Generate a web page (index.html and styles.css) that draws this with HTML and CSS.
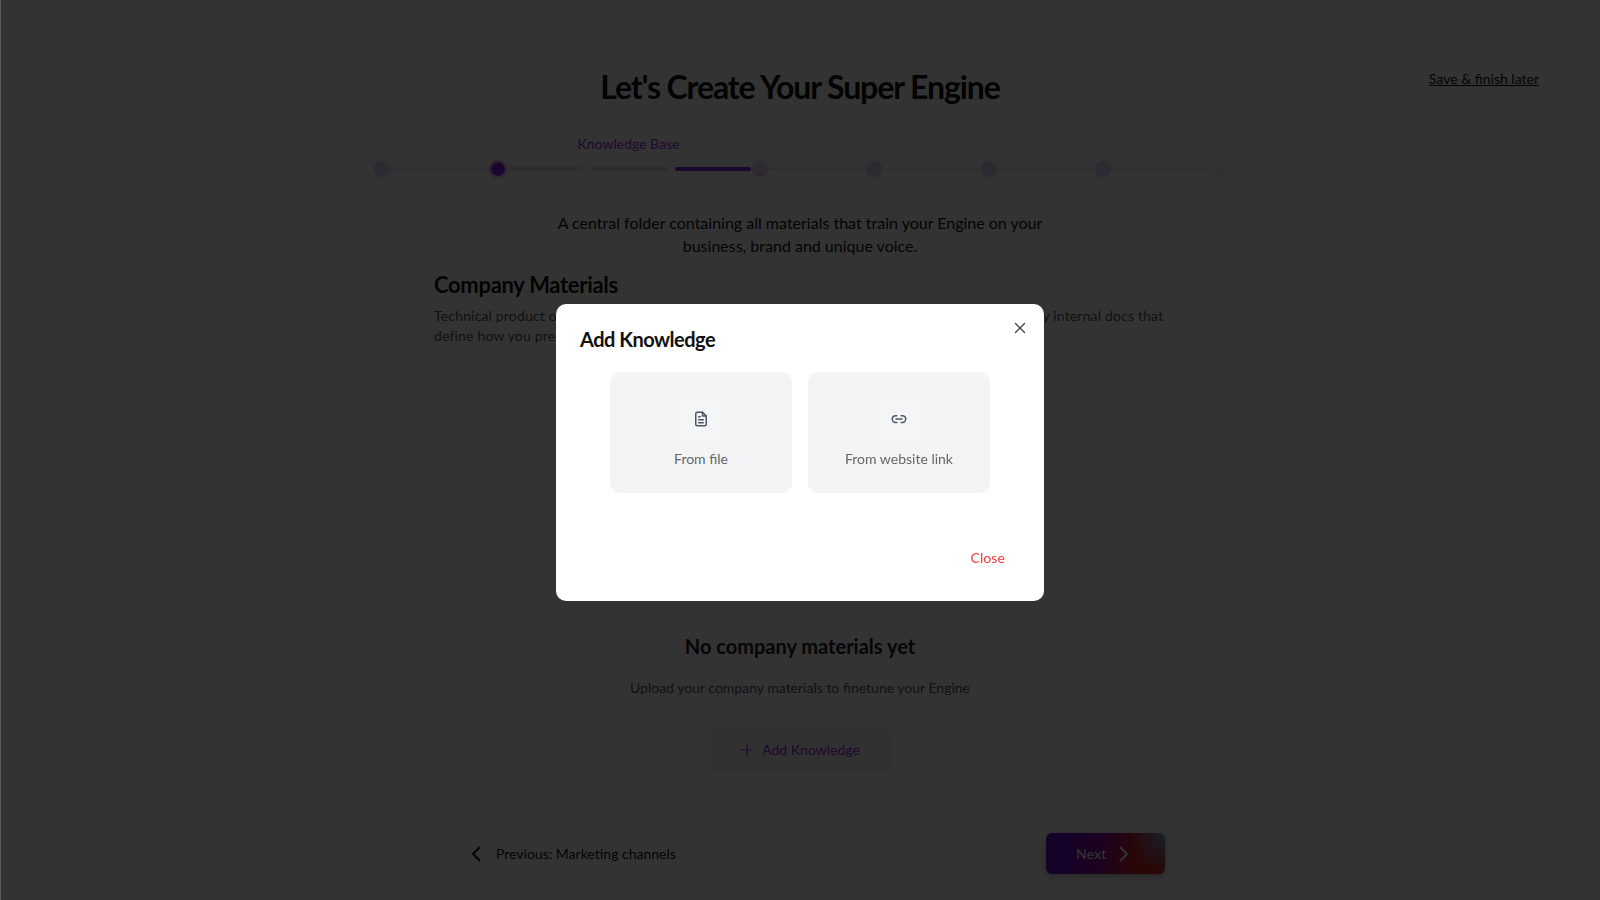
FILE: index.html
```html
<!DOCTYPE html>
<html lang="en">
<head>
<meta charset="utf-8">
<title>Let's Create Your Super Engine</title>
<link rel="stylesheet" href="styles.css">
</head>
<body>
<div class="page">
  <header class="top">
    <span></span>
    <h1 class="title">Let's Create Your Super Engine</h1>
    <a class="later" href="#">Save &amp; finish later</a>
  </header>

  <div class="stepper">
    <div class="step-col">
      <span class="dot"></span><span class="line"></span>
    </div>
    <div class="step-col">
      <span class="dot dot-active"></span>
      <span class="seg seg-light"></span>
      <span class="seg-wrap"><span class="step-label">Knowledge Base</span><span class="seg seg-light"></span></span>
      <span class="seg seg-on"></span>
    </div>
    <div class="step-col step-plain"><span class="dot"></span><span class="line"></span></div>
    <div class="step-col step-plain"><span class="dot"></span><span class="line"></span></div>
    <div class="step-col step-plain"><span class="dot"></span><span class="line"></span></div>
    <div class="step-col step-plain"><span class="dot"></span><span class="line"></span></div>
    <span class="dot dot-last"></span>
  </div>

  <p class="intro">A central folder containing all materials that train your Engine on your<br>business, brand and unique voice.</p>

  <main class="content">
    <h2 class="section-title">Company Materials</h2>
    <p class="section-text">Technical product overviews, case studies, white papers, sales decks, pricing guides, FAQs and any internal docs that<br>define how you present your products and services to your customers.</p>

    <div class="empty">
      <h3 class="empty-title">No company materials yet</h3>
      <p class="empty-text">Upload your company materials to finetune your Engine</p>
      <button class="add-btn" type="button">
        <svg width="14" height="14" viewBox="0 0 14 14" fill="none" stroke="currentColor" stroke-width="1.2" stroke-linecap="round"><path d="M7 1.5v11M1.5 7h11"/></svg>
        <span>Add Knowledge</span>
      </button>
    </div>

    <footer class="nav">
      <button class="prev" type="button">
        <svg width="12" height="18" viewBox="0 0 12 18" fill="none" stroke="currentColor" stroke-width="2" stroke-linecap="round" stroke-linejoin="round"><path d="M9.5 2.5 3 9l6.5 6.5"/></svg>
        <span>Previous: Marketing channels</span>
      </button>
      <button class="next" type="button">
        <span>Next</span>
        <svg width="12" height="18" viewBox="0 0 12 18" fill="none" stroke="currentColor" stroke-width="2" stroke-linecap="round" stroke-linejoin="round"><path d="M2.500 2.500 9 9l-6.500 6.500"/></svg>
      </button>
    </footer>
  </main>
</div>

<div class="overlay">
  <section class="modal">
    <button class="x" type="button" aria-label="Close">
      <svg width="14" height="14" viewBox="0 0 14 14" fill="none" stroke="currentColor" stroke-width="1.3" stroke-linecap="round"><path d="M2.500 2.500l9 9M11.500 2.500l-9 9"/></svg>
    </button>
    <h2 class="modal-title">Add Knowledge</h2>
    <div class="cards">
      <button class="card" type="button">
        <span class="tile">
          <svg width="18" height="18" viewBox="0 0 24 24" fill="none" stroke="currentColor" stroke-width="2" stroke-linecap="round" stroke-linejoin="round"><path d="M14 3H7a2 2 0 0 0-2 2v14a2 2 0 0 0 2 2h10a2 2 0 0 0 2-2V8z"/><path d="M14 3v5h5"/><path d="M9 9h2M9 13h6M9 17h6"/></svg>
        </span>
        <span class="card-label">From file</span>
      </button>
      <button class="card" type="button">
        <span class="tile">
          <svg width="18" height="18" viewBox="0 0 24 24" fill="none" stroke="currentColor" stroke-width="2" stroke-linecap="round" stroke-linejoin="round"><path d="M9 7.500H7.500a4.500 4.500 0 0 0 0 9H9"/><path d="M15 7.500h1.500a4.500 4.500 0 0 1 0 9H15"/><path d="M8 12h8"/></svg>
        </span>
        <span class="card-label">From website link</span>
      </button>
    </div>
    <div class="modal-foot">
      <button class="close" type="button">Close</button>
    </div>
  </section>
</div>
</body>
</html>
```
FILE: styles.css
```css
* { box-sizing: border-box; }
html, body { margin: 0; height: 100%; }
body {
  background: #fff;
  color: #111;
  font-family: Lato, "Open Sans", Arial, sans-serif;
  overflow: hidden;
}
button { font: inherit; cursor: pointer; }

.page { height: 900px; display: flex; flex-direction: column; align-items: center; }

.top {
  width: 100%;
  display: grid;
  grid-template-columns: 1fr auto 1fr;
  padding-top: 64px;
}
.title {
  margin: 0;
  font-size: 32px;
  line-height: 46px;
  font-weight: 700;
  letter-spacing: -1.1px;
  color: #111;
  text-align: center;
}
.later {
  justify-self: end;
  margin: 6px 61px 0 0;
  font-size: 14px;
  line-height: 18px;
  color: #111;
}

.stepper {
  display: flex;
  align-items: center;
  width: 852px;
  height: 18px;
  margin-top: 50px;
}
.step-col { display: flex; align-items: center; width: 114.500px; flex: none; }
.step-col:nth-child(2) { width: 263px; }
.dot {
  width: 16px; height: 16px; border-radius: 50%;
  background: #e2d8f2; flex: none;
  box-shadow: 0 0 0 1px #f0eaf8;
}
.dot-last { background: #f4f0f9; box-shadow: none; }
.dot-active {
  width: 18px; height: 18px;
  background: #8a20e0;
  border: 1px solid #c8b4e6;
  box-shadow: inset 0 0 0 1px #fff;
}
.line { flex: 1; height: 1px; background: #dfd6ee; }
.seg { display: block; height: 4px; border-radius: 2px; width: 76px; flex: none; }
.seg-light { background: #e2dbee; }
.seg-on { background: #8a20e0; margin-left: 8px; }
.seg-wrap { position: relative; margin-left: 8px; }
.step-label {
  position: absolute;
  left: 50%;
  top: -32px;
  transform: translateX(-50%);
  white-space: nowrap;
  font-size: 14px;
  line-height: 18px;
  color: #9c28f0;
}

.intro {
  margin: 34px 0 0;
  text-align: center;
  font-size: 16px;
  line-height: 22.500px;
  color: #111;
}

.content { width: 732px; flex: 1; display: flex; flex-direction: column; }
.section-title {
  margin: 13px 0 0;
  font-size: 22px;
  line-height: 30px;
  font-weight: 700;
  letter-spacing: -0.3px;
  color: #111;
}
.section-text {
  margin: 6px 0 0;
  font-size: 14px;
  line-height: 20px;
  letter-spacing: 0.17px;
  color: #555;
  white-space: nowrap;
}

.empty {
  margin-top: 287px;
  display: flex;
  flex-direction: column;
  align-items: center;
}
.empty-title { margin: 0; font-size: 20px; line-height: 26px; font-weight: 700; color: #222; }
.empty-text { margin: 19px 0 0; font-size: 14px; line-height: 20px; color: #555; }
.add-btn {
  margin-top: 30px;
  width: 181px; height: 43px;
  display: flex; align-items: center; justify-content: center; gap: 8px;
  background: #f5f3f8;
  border: 0;
  border-radius: 6px;
  color: #9c28f0;
  font-size: 14px;
}

.nav { margin-top: auto; padding-bottom: 26px; display: flex; justify-content: space-between; align-items: center; }
.prev {
  width: 271px; height: 41px;
  display: flex; align-items: center; gap: 14px;
  padding: 0 0 0 35px;
  background: #fff;
  border: 1px solid #f0f0f0;
  border-radius: 6px;
  color: #111;
  font-size: 14px;
}
.next {
  width: 119px; height: 41px;
  margin-right: 1px;
  display: flex; align-items: center; gap: 11px;
  padding: 0 0 0 30px;
  border: 0;
  border-radius: 6px;
  color: #fff;
  font-size: 14px;
  letter-spacing: 0.2px;
  background:
    radial-gradient(circle at 100% 10%, rgba(90,180,240,.8) 0, rgba(90,180,240,0) 28%),
    linear-gradient(100deg, #6a0cc8 0, #6a0cc8 20%, #8c1090 48%, #d02222 75%, #c82828 100%);
  box-shadow: 0 2px 6px rgba(0,0,0,.3);
}

.overlay {
  position: fixed;
  inset: 0;
  background: rgba(0,0,0,.8);
  border-left: 1px solid rgba(255,255,255,.2);
  padding: 304px 1px 0 0;
  display: flex;
  justify-content: center;
  align-items: flex-start;
}
.modal {
  position: relative;
  width: 488px;
  height: 297px;
  background: #fff;
  border-radius: 10px;
  padding: 22px 24px 0;
  display: flex;
  flex-direction: column;
}
.x {
  position: absolute;
  top: 17px; right: 17px;
  width: 14px; height: 14px; padding: 0;
  background: none; border: 0;
  color: #444;
  display: flex;
}
.modal-title {
  margin: 0;
  font-size: 20px;
  line-height: 27px;
  font-weight: 700;
  letter-spacing: -0.5px;
  color: #111;
}
.cards {
  display: flex;
  justify-content: center;
  gap: 15.500px;
  margin-top: 19px;
}
.card {
  width: 182.500px; height: 121px;
  background: #f3f4f6;
  border: 0;
  border-radius: 10px;
  padding: 25px 0 0;
  display: flex;
  flex-direction: column;
  align-items: center;
}
.tile {
  width: 44px; height: 44px;
  border-radius: 8px;
  background: #f4f5f7;
  color: #4b5563;
  display: flex; align-items: center; justify-content: center;
}
.card-label {
  margin-top: 8px;
  font-size: 14px;
  line-height: 20px;
  color: #666;
}
.modal-foot { margin-top: auto; padding: 0 15px 33px 0; display: flex; justify-content: flex-end; }
.close {
  padding: 0;
  background: none; border: 0;
  color: #f23b3b;
  font-size: 14px;
  line-height: 20px;
  letter-spacing: 0.1px;
}
```
